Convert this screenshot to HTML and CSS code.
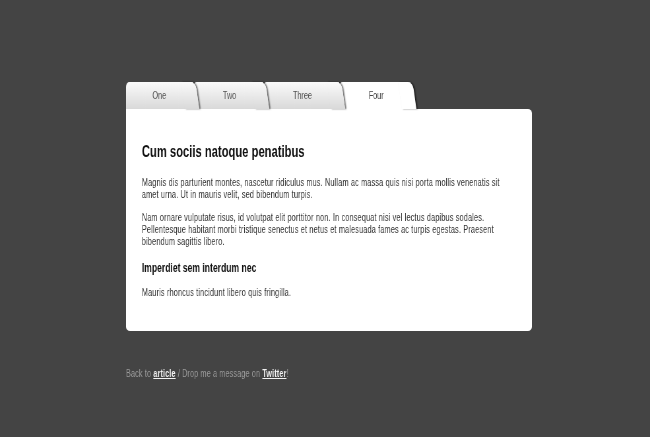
FILE: index.html
```html
<!DOCTYPE html>
<html lang="en">
<head>
<meta charset="utf-8">
<title>CSS3 Tabs</title>
<link rel="stylesheet" href="styles.css">
</head>
<body>
<div class="page">
  <div class="tabbox">
    <ul class="tabs">
      <li class="tab">One</li>
      <li class="tab">Two</li>
      <li class="tab">Three</li>
      <li class="tab active">Four</li>
    </ul>
    <div class="panel">
      <h2>Cum sociis natoque penatibus</h2>
      <p>Magnis dis parturient montes, nascetur ridiculus mus. Nullam ac massa quis nisi porta mollis venenatis sit amet urna. Ut in mauris velit, sed bibendum turpis.</p>
      <p>Nam ornare vulputate risus, id volutpat elit porttitor non. In consequat nisi vel lectus dapibus sodales. Pellentesque habitant morbi tristique senectus et netus et malesuada fames ac turpis egestas. Praesent bibendum sagittis libero.</p>
      <h3>Imperdiet sem interdum nec</h3>
      <p>Mauris rhoncus tincidunt libero quis fringilla.</p>
    </div>
  </div>
  <p class="footer">Back to <a href="#">article</a> / Drop me a message on <a href="#">Twitter</a>!</p>
</div>
</body>
</html>
```
FILE: styles.css
```css
html {
  background: #444;
}

body {
  margin: 0;
  padding: 0;
  font-family: "Liberation Sans", Arial, sans-serif;
  color: #333;
}

/* the page is drawn horizontally condensed (scaled toward x = 371px) */
.page {
  width: 615px;
  padding: 82px 0 0;
  transform: scaleX(0.66);
  transform-origin: 370.6px 0;
  will-change: transform;
}

.tabs {
  display: flex;
  list-style: none;
  margin: 0;
  padding: 0;
}

.tab {
  position: relative;
  height: 27px;
  line-height: 27px;
  padding: 0 41px 0 45px;
  font-size: 11px;
  color: #555;
  background: linear-gradient(#fbfbfb, #d9d9d9);
  border-top-left-radius: 5px;
}

.tab:first-child {
  padding: 0 41px 0 40px;
}

.tab::after {
  content: "";
  position: absolute;
  top: 0;
  bottom: 0;
  right: -9px;
  width: 22px;
  background: inherit;
  border-top-right-radius: 7px;
  transform: skewX(12deg);
  transform-origin: bottom;
  box-shadow: 2px 0 2px rgba(0, 0, 0, 0.55);
  z-index: -1;
}

.tab:nth-child(1) { z-index: 4; }
.tab:nth-child(2) { z-index: 3; }
.tab:nth-child(3) { z-index: 2; }
.tab:nth-child(4) { z-index: 1; }

.tab.active {
  background: #fff;
  color: #444;
}

.panel {
  background: #fff;
  border-radius: 0 6px 6px 6px / 0 4px 4px 4px;
  padding: 1px 31px 33px 24px;
}

.panel h2 {
  margin: 32px 0 0;
  font-size: 17px;
  line-height: 20px;
  color: #111;
}

.panel p {
  margin: 14px 0 0;
  font-size: 11px;
  line-height: 12px;
  letter-spacing: 0.27px;
}

.panel p + p {
  margin-top: 11px;
}

.panel h3 {
  margin: 13px 0 0;
  font-size: 13px;
  line-height: 15px;
  color: #111;
}

.panel h3 + p {
  margin-top: 11px;
}

.footer {
  margin: 35px 0 0;
  font-size: 11px;
  line-height: 14px;
  letter-spacing: 0.2px;
  color: #9a9a9a;
}

.footer a {
  color: #f2f2f2;
  font-weight: bold;
}
```
